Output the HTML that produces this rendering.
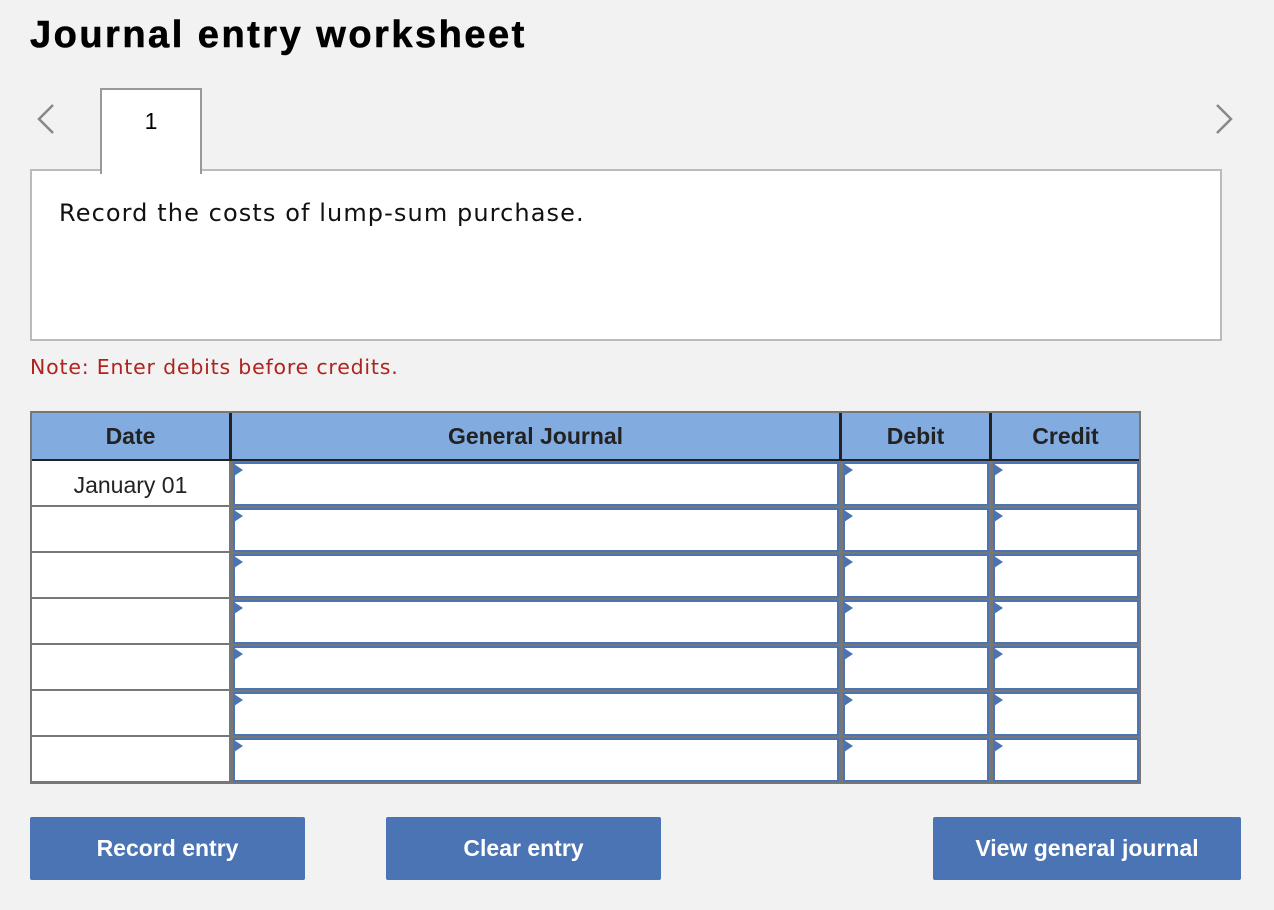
<!DOCTYPE html><html><head><style>
body{margin:0;width:1274px;height:910px;background:#f2f2f2;font-family:"Liberation Sans",sans-serif;position:relative;overflow:hidden}
.a{position:absolute}
h1{position:absolute;left:30px;top:14px;margin:0;font-size:38px;font-weight:bold;color:#000;letter-spacing:2.5px;-webkit-text-stroke:0.6px #000}
.hd{background:#82abdf;font-weight:bold;font-size:23px;color:#222;display:flex;align-items:center;justify-content:center}
.in{position:absolute;background:#fff;border:2px solid #4a74b4;box-sizing:border-box}
.in:before{content:"";position:absolute;left:-1px;top:0;border-left:9px solid #4a74b4;border-top:6px solid transparent;border-bottom:6px solid transparent}
.btn{position:absolute;top:817px;height:63px;background:#4a74b4;color:#fff;font-weight:bold;font-size:23px;display:flex;align-items:center;justify-content:center;border-radius:2px}
</style></head><body>
<h1>Journal entry worksheet</h1>
<svg class="a" style="left:34px;top:102px" width="24" height="34"><path d="M19 3 L5 17 L19 31" stroke="#888" stroke-width="2.5" fill="none"/></svg>
<svg class="a" style="left:1212px;top:102px" width="24" height="34"><path d="M5 3 L19 17 L5 31" stroke="#888" stroke-width="2.5" fill="none"/></svg>
<div class="a" style="left:30px;top:169px;width:1188px;height:168px;background:#fff;border:2px solid #bbb"></div>
<div class="a" style="left:100px;top:88px;width:98px;height:84px;background:#fff;border:2px solid #999;border-bottom:none;text-align:center;font-size:23px;line-height:62px">1</div>
<div class="a" style="left:59px;top:199px;font-family:'DejaVu Sans',sans-serif;font-size:24px;letter-spacing:1.1px;color:#111">Record the costs of lump-sum purchase.</div>
<div class="a" style="left:30px;top:355px;font-family:'DejaVu Sans',sans-serif;font-size:20.5px;letter-spacing:0.8px;color:#b0221e">Note: Enter debits before credits.</div>
<div class="a" style="left:30px;top:411px;width:1111px;height:373px;background:#777"></div>
<div class="a hd" style="left:32px;top:413px;width:197px;height:46px">Date</div>
<div class="a hd" style="left:232px;top:413px;width:607px;height:46px">General Journal</div>
<div class="a hd" style="left:842px;top:413px;width:147px;height:46px">Debit</div>
<div class="a hd" style="left:992px;top:413px;width:147px;height:46px">Credit</div>
<div class="a" style="left:32px;top:459px;width:1107px;height:2px;background:#222"></div>
<div class="a" style="left:229px;top:413px;width:3px;height:48px;background:#222"></div>
<div class="a" style="left:839px;top:413px;width:3px;height:48px;background:#222"></div>
<div class="a" style="left:989px;top:413px;width:3px;height:48px;background:#222"></div>
<div id="rows"></div>
<script>
var h='';for(var i=0;i<7;i++){var t=461+i*46;
h+='<div class="a" style="left:32px;top:'+t+'px;width:197px;height:44px;background:#fff;font-size:23px;color:#222;text-align:center;line-height:48px">'+(i==0?'January 01':'')+'</div>';
h+='<div class="a" style="left:231px;top:'+t+'px;width:609px;height:46px;background:#777"></div>';
h+='<div class="in" style="left:233px;top:'+(t+1)+'px;width:606px;height:44px"></div>';
h+='<div class="in" style="left:843px;top:'+(t+1)+'px;width:146px;height:44px"></div>';
h+='<div class="in" style="left:993px;top:'+(t+1)+'px;width:146px;height:44px"></div>';}
document.getElementById('rows').innerHTML=h;
</script>
<div class="btn" style="left:30px;width:275px">Record entry</div>
<div class="btn" style="left:386px;width:275px">Clear entry</div>
<div class="btn" style="left:933px;width:308px">View general journal</div>
</body></html>
